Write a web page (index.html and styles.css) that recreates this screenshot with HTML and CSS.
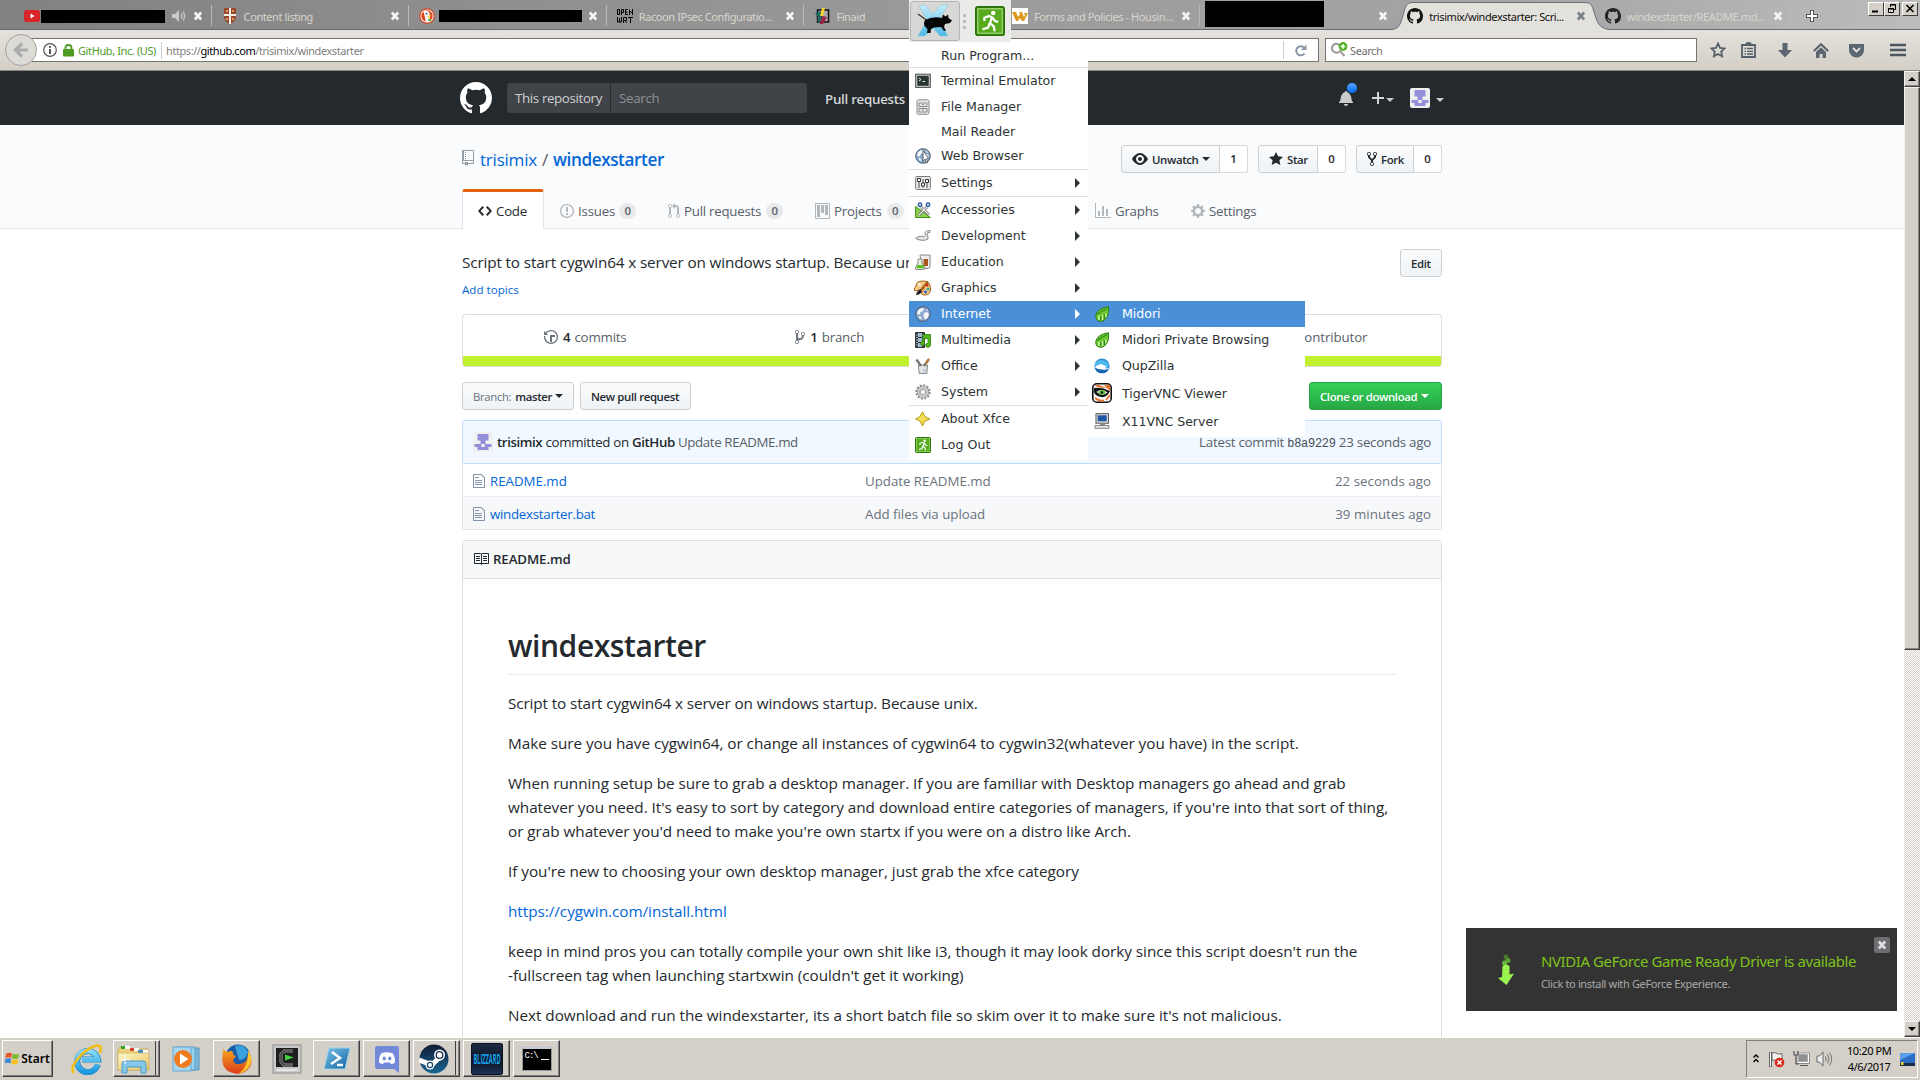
FILE: index.html
```html
<!DOCTYPE html>
<html lang="en">
<head>
<meta charset="utf-8">
<title>trisimix/windexstarter</title>
<link rel="stylesheet" href="styles.css">
</head>
<body>
<svg class="defs" width="0" height="0">
  <defs>
    <symbol id="x" viewBox="0 0 10 10"><path d="M1.8 1.5 8.2 8.5M8.2 1.5 1.8 8.5" stroke="currentColor" stroke-width="2.6"/></symbol>
    <symbol id="caret" viewBox="0 0 8 4"><path d="M0 0h8L4 4z" fill="currentColor"/></symbol>
    <symbol id="gh" viewBox="0 0 16 16"><path d="M8 0C3.58 0 0 3.58 0 8c0 3.54 2.29 6.53 5.47 7.59.4.07.55-.17.55-.38 0-.19-.01-.82-.01-1.49-2.01.37-2.53-.49-2.69-.94-.09-.23-.48-.94-.82-1.13-.28-.15-.68-.52-.01-.53.63-.01 1.08.58 1.23.82.72 1.21 1.87.87 2.33.66.07-.52.28-.87.51-1.07-1.78-.2-3.64-.89-3.64-3.95 0-.87.31-1.59.82-2.15-.08-.2-.36-1.02.08-2.12 0 0 .67-.21 2.2.82.64-.18 1.32-.27 2-.27.68 0 1.36.09 2 .27 1.53-1.04 2.2-.82 2.2-.82.44 1.1.16 1.92.08 2.12.51.56.82 1.27.82 2.15 0 3.07-1.87 3.75-3.65 3.95.29.25.54.73.54 1.48 0 1.07-.01 1.93-.01 2.2 0 .21.15.46.55.38A8.013 8.013 0 0 0 16 8c0-4.42-3.58-8-8-8z" fill="currentColor"/></symbol>
    <symbol id="avatar" viewBox="0 0 20 20"><rect width="20" height="20" rx="2" fill="#f0f0f0"/><path d="M4.500 2h11v6.500h-3V12h6v3h-3v3h-11v-3h-3v-3h6V8.500h-3z" fill="#938fd9"/><path d="M8.300 12h3.400v3H8.300z" fill="#f0f0f0"/></symbol>
    <symbol id="file" viewBox="0 0 12 16"><path d="M6 5H2V4h4v1zM2 8h7V7H2v1zm0 2h7V9H2v1zm0 2h7v-1H2v1zm10-7.500V14c0 .55-.45 1-1 1H1c-.55 0-1-.45-1-1V2c0-.55.45-1 1-1h7.500L12 4.500zM11 5L8 2H1v12h10V5z" fill="currentColor"/></symbol>
    <symbol id="leaf" viewBox="0 0 16 16"><path d="M14.500.8C8 1.500 1.500 5 1.800 11c.2 3 2.700 4.500 5 4.300C12 15 15.500 9 14.500.8z" fill="#6cc82f" stroke="#2b7d14"/><path d="M5 14V9.500M8.500 14V9M12 11V7.500" stroke="#d8f7b0" stroke-width="1.300" fill="none"/><path d="M3.500 8.500C7 5 10 4 13.500 2.500M6.800 14V10M10.300 13V8.500" stroke="#2f8a18" fill="none" stroke-width="1.200"/></symbol>
    <symbol id="exit" viewBox="0 0 16 16"><rect x=".5" y=".5" width="15" height="15" rx="1" fill="#57ab1d" stroke="#2c7409"/><rect x="1.500" y="1.500" width="13" height="13" fill="none" stroke="#b7e39a" stroke-width=".5"/><circle cx="9.700" cy="3.700" r="1.200" fill="#fff"/><path d="M5 8V6.300L7.500 5.300 9 6 8 9.200l2 1.600.5 2.700M7.800 9.200 7 11.500 4 12.500M9.300 6l1.300 2 1.800.5" fill="none" stroke="#fff" stroke-width="1.200"/></symbol>
    <symbol id="globe" viewBox="0 0 16 16"><circle cx="8" cy="8" r="7.300" fill="#8eabcf" stroke="#4d5a6c"/><path d="M3 4.500C5 2 8 2 9 2.500L8 5 5.500 6 5 8 3.500 8.500 2 7zM9 7l3-1 2 2-1.500 4L10 13.500 8.500 10zM11 2.500l2 1.500-1 1zM4 10l2 1 .5 2.500L4 12z" fill="#f5f7fa"/></symbol>
    <linearGradient id="gfx" x2="0" y2="1"><stop stop-color="#c4ecfb"/><stop offset="1" stop-color="#4db8e4"/></linearGradient>
    <linearGradient id="ps" x2="1" y2="1"><stop stop-color="#7cc4e8"/><stop offset="1" stop-color="#0f62a4"/></linearGradient>
    <linearGradient id="fo" x2="1" y2="1"><stop stop-color="#fdf5c4"/><stop offset="1" stop-color="#e8c766"/></linearGradient>
    <linearGradient id="fx" x2="0" y2="1"><stop stop-color="#f9a61b"/><stop offset="1" stop-color="#d93a1c"/></linearGradient>
    <linearGradient id="st" x2="0" y2="1"><stop stop-color="#101a33"/><stop offset="1" stop-color="#1b6795"/></linearGradient>
    <linearGradient id="ie" x2="0" y2="1"><stop stop-color="#8adcf8"/><stop offset="1" stop-color="#1d9be0"/></linearGradient>
  </defs>
</svg>

<div class="tabstrip">
  <div class="tab">
    <svg width="16" height="12" viewBox="0 0 16 12"><rect width="16" height="12" rx="2.500" fill="#d9252a"/><path d="M6.500 3.500v5l4-2.500z" fill="#fff"/></svg>
    <span class="redact r1"></span>
    <svg class="spk" width="14" height="12" viewBox="0 0 14 12"><path d="M0 4h3l4-4v12L3 8H0z" fill="#c9c9c3"/><path d="M9 3.500q2 2.500 0 5M11 1.500q3.500 4.500 0 9" fill="none" stroke="#c9c9c3" stroke-width="1.300"/></svg>
    <svg class="close"><use href="#x"/></svg>
  </div>
  <div class="tab">
    <svg width="16" height="16" viewBox="0 0 16 16"><path d="M2 0h12v9q-1 5-6 7-5-2-6-7z" fill="#99452f"/><path d="M8 0v16M2 7h12" stroke="#f5efe6" stroke-width="2"/><path d="M4 3h2M10 3h2M4 11h2M10 11h2" stroke="#d8a25a" stroke-width="2"/></svg>
    <span class="title">Content listing</span><svg class="close"><use href="#x"/></svg>
  </div>
  <div class="tab">
    <svg width="16" height="16" viewBox="0 0 16 16"><circle cx="8" cy="8" r="7.800" fill="#d9431e"/><circle cx="8" cy="8" r="6.600" fill="#fff"/><circle cx="8" cy="8" r="5.700" fill="#d9431e"/><path d="M4.500 3.500q4-2 6 1.500l.5 4-1 5H7z" fill="#fff"/><path d="M8.500 7.500h4l-2 2h-2z" fill="#fc3"/><circle cx="7.500" cy="5.700" r=".9" fill="#246"/><path d="M9 11h3v2H9z" fill="#5b3"/></svg>
    <span class="redact r3"></span><svg class="close"><use href="#x"/></svg>
  </div>
  <div class="tab">
    <svg width="16" height="14" viewBox="0 0 16 14" fill="none" stroke="#000"><path d="M.5.5h2v5h-2zM4.500 6V.5h2v3h-2M11 .5H8.500v5H11M8.500 3H10.500M12.500 6V.5M15.500 0v6M12.500 1.500l3 3M.5 8v5h4V8M2.500 9v4M6.500 14V8.500h3v3h-3M8.500 11.500l1 2.500M11 8.500h5M13.500 8.500V14"/></svg>
    <span class="title">Racoon IPsec Configuratio...</span><svg class="close"><use href="#x"/></svg>
  </div>
  <div class="tab">
    <svg width="16" height="16" viewBox="0 0 16 16"><rect x="3.500" y="2" width="11" height="12" fill="#aaa" stroke="#111" stroke-width="1.500"/><path d="M1 5 8 3l1 6-4 6-2-3 2-2z" fill="#17695f"/><path d="M8 0h3L9 8H6z" fill="#f6d32f"/><path d="M8 8 13 9l-4 7H6z" fill="#9c2146"/></svg>
    <span class="title">Finaid</span>
  </div>
  <div class="tab">
    <svg width="16" height="16" viewBox="0 0 16 16"><rect width="16" height="16" fill="#fff"/><path d="M0 4h4l2 5 2-3-1-2h3l2 5 1-2-1-2h4l-4 8h-2L8 10l-2 3H4z" fill="#d99a1d"/></svg>
    <span class="title">Forms and Policies - Housin...</span><svg class="close"><use href="#x"/></svg>
  </div>
  <div class="tab last"><span class="redact r7"></span><svg class="close"><use href="#x"/></svg></div>
  <div class="tab active">
    <svg class="shape" width="220" height="30" viewBox="0 0 220 30"><path d="M0 30C10 29 10 21 13 12 15 4 17 2.500 23 2.500H193C199 2.500 201 4 203 12 206 21 207 29 220 30z" fill="#e3e1db"/><path d="M0 29.500C10 29 10 21 13 12 15 4 17 2.500 23 2.500H193C199 2.500 201 4 203 12 206 21 207 29 220 29.500" fill="none" stroke="#697078"/></svg>
    <svg width="16" height="16" color="#111"><use href="#gh"/></svg>
    <span class="title">trisimix/windexstarter: Scri...</span><svg class="close"><use href="#x"/></svg>
  </div>
  <div class="tab">
    <svg width="16" height="16" color="#222"><use href="#gh"/></svg>
    <span class="title">windexstarter/README.md...</span><svg class="close"><use href="#x"/></svg>
  </div>
  <svg class="newtab" width="12" height="12" viewBox="0 0 12 12"><path d="M6 0v12M0 6h12" stroke="#555" stroke-width="4"/><path d="M6 1v10M1 6h10" stroke="#fff" stroke-width="2"/></svg>
  <div class="winbtns">
    <b><svg width="12" height="11"><path d="M2 8.500h6" stroke="#000" stroke-width="2"/></svg></b><b><svg width="12" height="11"><path d="M4.500 4V1.500h5v5H8M4 2h6M2.500 5.500h5v4h-5zM2 6h6" stroke="#000" fill="none"/></svg></b><b class="gap"><svg width="12" height="11"><path d="M2.500 2l7 7M9.500 2l-7 7" stroke="#000" stroke-width="1.600"/></svg></b>
  </div>
</div>

<div class="toolbar">
  <div class="back"><svg width="16" height="16" viewBox="0 0 16 16"><path d="M9 1.500 2.500 8 9 14.500M3 8h12" fill="none" stroke="#a8acae" stroke-width="3.200"/></svg></div>
  <div class="url">
    <svg width="14" height="14" viewBox="0 0 14 14"><circle cx="7" cy="7" r="6.300" fill="none" stroke="#555" stroke-width="1.200"/><path d="M7 6v5M7 3v1.800" stroke="#444" stroke-width="1.800"/></svg>
    <svg width="11" height="13" viewBox="0 0 11 13"><path d="M2.500 6V4a3 3 0 0 1 6 0v2" fill="none" stroke="#4d9a1e" stroke-width="1.800"/><rect y="5" width="11" height="7.500" rx="1" fill="#4d9a1e"/></svg>
    <span class="ident">GitHub, Inc. (US)</span>
    <span class="addr">https://<i>github.com</i>/trisimix/windexstarter</span>
    <span class="reload"><svg width="13" height="13" viewBox="0 0 13 13"><path d="M10.500 9.500a4.600 4.600 0 1 1-.4-6" fill="none" stroke="#8796a5" stroke-width="2"/><path d="M12.500.5v5.500H7z" fill="#8796a5"/></svg></span>
  </div>
  <div class="search"><svg width="17" height="17" viewBox="0 0 17 17"><path d="M9 3.500A4.500 4.500 0 1 0 9 9l4.500 5" fill="none" stroke="#9a9a9a" stroke-width="2"/><circle cx="12" cy="4.500" r="4.400" fill="#4fae1f"/><path d="M12 2v5M9.500 4.500h5" stroke="#fff" stroke-width="1.400"/></svg><span>Search</span></div>
  <div class="tools">
    <svg width="16" height="16" viewBox="0 0 16 16"><path d="M8 1.500l2 4.300 4.600.6-3.400 3.200.9 4.600L8 12l-4.100 2.200.9-4.600L1.400 6.400 6 5.800z" fill="none" stroke="#56606a" stroke-width="1.800"/></svg>
    <svg class="t2" width="15" height="16" viewBox="0 0 15 16"><path d="M1 3h13v12H1zM5 3q0-2 2.500-2T10 3" fill="none" stroke="#56606a" stroke-width="1.800"/><path d="M3.500 6.500h1.500M6 6.500h6M3.500 9.300h1.500M6 9.300h6M3.500 12h1.500M6 12h6" stroke="#56606a" stroke-width="1.300"/></svg>
    <svg class="t3" width="16" height="15" viewBox="0 0 16 15"><path d="M5.500 0h5v7H15l-7 7.500L1 7h4.500z" fill="#5b6671"/></svg>
    <svg class="t4" width="16" height="15" viewBox="0 0 16 15"><path d="M.8 8 8 1.200 15.200 8" fill="none" stroke="#56606a" stroke-width="2"/><path d="M3 9l5-4.700L13 9v6h-3.500v-4h-3v4H3z" fill="#5b6671"/></svg>
    <svg class="t5" width="17" height="15" viewBox="0 0 17 15"><path d="M1 1h15v6a7.500 7.500 0 0 1-15 0z" fill="#5b6671"/><path d="M5 5l3.500 3.500L12 5" fill="none" stroke="#e3e1db" stroke-width="1.800"/></svg>
    <svg class="t6" width="16" height="14" viewBox="0 0 16 14"><path d="M0 2h16M0 7h16M0 12h16" stroke="#4d5863" stroke-width="2.600"/></svg>
  </div>
</div>

<div class="view">
 <div class="page">
  <div class="ghbar"><div class="wrap">
    <svg width="32" height="32" color="#fff"><use href="#gh"/></svg>
    <div class="ghsearch"><span class="scope">This repository</span><span class="ph">Search</span></div>
    <span class="nav">Pull requests</span>
    <div class="user">
      <span class="bell"><svg width="15" height="16" viewBox="0 0 15 16"><path d="M14 12v1H0v-1l.73-.58c.77-.77.81-2.550 1.190-4.420C2.690 3.230 6 2 6 2c0-.55.45-1 1-1s1 .45 1 1c0 0 3.390 1.230 4.160 5 .38 1.880.42 3.660 1.190 4.420l.66.58H14zm-7 4c1.110 0 2-.89 2-2H5c0 1.110.89 2 2 2z" fill="#ccc"/></svg><i></i></span>
      <svg class="plus" width="12" height="16" viewBox="0 0 12 16"><path d="M12 9H7v5H5V9H0V7h5V2h2v5h5z" fill="#d5d6d7"/></svg><svg class="c1" width="8" height="4"><use href="#caret"/></svg>
      <svg class="av" width="20" height="20"><use href="#avatar"/></svg><svg class="c2" width="8" height="4"><use href="#caret"/></svg>
    </div>
  </div></div>

  <div class="repohead"><div class="wrap col">
    <div class="rtitle">
      <svg width="12" height="16" viewBox="0 0 12 16"><path d="M4 9H3V8h1v1zm0-3H3v1h1V6zm0-2H3v1h1V4zm0-2H3v1h1V2zm8-1v12c0 .55-.45 1-1 1H6v2l-1.500-1.500L3 16v-2H1c-.55 0-1-.45-1-1V1c0-.55.45-1 1-1h10c.55 0 1 .45 1 1zm-1 10H1v2h2v-1h3v1h5v-2zm0-10H2v9h9V1z" fill="#959da5"/></svg>
      <a>trisimix</a><span class="slash">/</span><a class="name">windexstarter</a>
      <div class="social">
        <div class="pair w1"><span class="btn"><svg width="16" height="16" viewBox="0 0 16 16"><path d="M8.060 2C3 2 0 8 0 8s3 6 8.060 6C13 14 16 8 16 8s-3-6-7.940-6zM8 12c-2.200 0-4-1.780-4-4 0-2.200 1.800-4 4-4 2.220 0 4 1.800 4 4 0 2.220-1.780 4-4 4zm2-4c0 1.110-.89 2-2 2-1.110 0-2-.89-2-2 0-1.110.89-2 2-2 1.110 0 2 .89 2 2z" fill="#24292e"/></svg>Unwatch<svg class="cr" width="8" height="4"><use href="#caret"/></svg></span><span class="num">1</span></div>
        <div class="pair w2"><span class="btn"><svg width="14" height="16" viewBox="0 0 14 16"><path d="M14 6l-4.900-.64L7 1 4.900 5.360 0 6l3.600 3.260L2.670 14 7 11.670 11.330 14l-.93-4.740L14 6z" fill="#24292e"/></svg>Star</span><span class="num">0</span></div>
        <div class="pair w3"><span class="btn"><svg width="10" height="16" viewBox="0 0 10 16"><path d="M8 1a1.993 1.993 0 0 0-1 3.720V6L5 8 3 6V4.720A1.993 1.993 0 0 0 2 1a1.993 1.993 0 0 0-1 3.720V6.500l3 3v1.780A1.993 1.993 0 0 0 5 15a1.993 1.993 0 0 0 1-3.720V9.500l3-3V4.720A1.993 1.993 0 0 0 8 1zM2 4.200C1.340 4.200.8 3.650.8 3c0-.65.55-1.200 1.200-1.200.65 0 1.200.55 1.200 1.200 0 .65-.55 1.200-1.200 1.200zm3 10c-.66 0-1.200-.55-1.200-1.200 0-.65.55-1.200 1.200-1.200.65 0 1.200.55 1.200 1.200 0 .65-.55 1.200-1.200 1.200zm3-10c-.66 0-1.200-.55-1.200-1.200 0-.65.55-1.200 1.200-1.200.65 0 1.200.55 1.200 1.200 0 .65-.55 1.200-1.200 1.200z" fill="#24292e"/></svg>Fork</span><span class="num">0</span></div>
      </div>
    </div>
    <div class="rtabs">
      <span class="rt on"><svg width="14" height="16" viewBox="0 0 14 16"><path d="M9.500 3L8 4.500 11.500 8 8 11.500 9.500 13 14 8 9.500 3zm-5 0L0 8l4.500 5L6 11.500 2.500 8 6 4.500 4.500 3z" fill="#24292e"/></svg><em>Code</em></span>
      <span class="rt issues"><svg width="14" height="16" viewBox="0 0 14 16"><path d="M7 2.300c3.140 0 5.700 2.560 5.700 5.700s-2.560 5.700-5.700 5.700A5.710 5.710 0 0 1 1.300 8c0-3.140 2.560-5.700 5.700-5.700zM7 1C3.140 1 0 4.140 0 8s3.140 7 7 7 7-3.140 7-7-3.140-7-7-7zm1 3H6v5h2V4zm0 6H6v2h2v-2z"/></svg><em>Issues</em><u>0</u></span>
      <span class="rt pulls"><svg width="12" height="16" viewBox="0 0 12 16"><path d="M11 11.280V5c-.03-.78-.34-1.470-.94-2.060C9.460 2.350 8.780 2.030 8 2H7V0L4 3l3 3V4h1c.27.02.48.11.69.31.21.2.3.42.31.69v6.280A1.993 1.993 0 0 0 10 15a1.993 1.993 0 0 0 1-3.720zm-1 2.920c-.66 0-1.200-.55-1.200-1.200 0-.65.55-1.200 1.200-1.200.65 0 1.200.55 1.200 1.200 0 .65-.55 1.200-1.200 1.200zM4 3c0-1.110-.89-2-2-2a1.993 1.993 0 0 0-1 3.720v6.560A1.993 1.993 0 0 0 2 15a1.993 1.993 0 0 0 1-3.720V4.720c.59-.34 1-.98 1-1.720zm-.8 10c0 .66-.55 1.200-1.200 1.200-.65 0-1.200-.55-1.200-1.200 0-.65.55-1.200 1.200-1.200.65 0 1.200.55 1.200 1.200zM2 4.200C1.340 4.200.8 3.650.8 3c0-.65.55-1.200 1.200-1.200.65 0 1.200.55 1.200 1.200 0 .65-.55 1.200-1.200 1.200z"/></svg><em>Pull requests</em><u>0</u></span>
      <span class="rt projects"><svg width="15" height="16" viewBox="0 0 15 16"><path fill-rule="evenodd" d="M10 12h3V2h-3v10zm-4-2h3V2H6v8zm-4 4h3V2H2v12zm-1 1h13V1H1v14zM14 0H1a1 1 0 0 0-1 1v14a1 1 0 0 0 1 1h13a1 1 0 0 0 1-1V1a1 1 0 0 0-1-1z"/></svg><em>Projects</em><u>0</u></span>
      <span class="rt graphs"><svg width="16" height="16" viewBox="0 0 16 16"><path d="M16 14v1H0V0h1v14h15zM5 13H3V8h2v5zm4 0H7V3h2v10zm4 0h-2V6h2v7z"/></svg><em>Graphs</em></span>
      <span class="rt sett"><svg width="14" height="16" viewBox="0 0 14 16"><path d="M14 8.770v-1.600l-1.940-.64-.45-1.090.88-1.840-1.130-1.130-1.810.91-1.090-.45-.69-1.920h-1.600l-.63 1.940-1.110.45-1.840-.88-1.130 1.130.91 1.810-.45 1.090L0 7.230v1.590l1.940.64.45 1.090-.88 1.840 1.130 1.130 1.810-.91 1.090.45.69 1.920h1.590l.63-1.940 1.110-.45 1.840.88 1.130-1.130-.92-1.810.47-1.090L14 8.750v.02zM7 11c-1.660 0-3-1.340-3-3s1.340-3 3-3 3 1.340 3 3-1.340 3-3 3z"/></svg><em>Settings</em></span>
    </div>
  </div></div>

  <div class="main">
    <div class="desc"><div><p class="about">Script to start cygwin64 x server on windows startup. Because unix.</p><a class="topics">Add topics</a></div><span class="btn solo">Edit</span></div>
    <div class="summary">
      <div class="nums">
        <span><svg width="14" height="16" viewBox="0 0 14 16"><path d="M8 13H6V6h5v2H8v5zM7 1C4.810 1 2.870 2.020 1.590 3.590L0 2v4h4L2.500 4.500C3.550 3.170 5.170 2.300 7 2.300c3.140 0 5.700 2.560 5.700 5.700s-2.560 5.700-5.700 5.700A5.710 5.710 0 0 1 1.300 8c0-.34.03-.67.09-1H.08C.03 7.330 0 7.660 0 8c0 3.860 3.140 7 7 7s7-3.140 7-7-3.140-7-7-7z"/></svg><b>4</b>commits</span>
        <span><svg width="10" height="16" viewBox="0 0 10 16"><path d="M10 5c0-1.110-.89-2-2-2a1.993 1.993 0 0 0-1 3.720v.3c-.02.52-.23.98-.63 1.380-.4.4-.86.61-1.380.63-.83.02-1.480.16-2 .45V4.720a1.993 1.993 0 0 0-1-3.720C.88 1 0 1.890 0 3a2 2 0 0 0 1 1.720v6.560c-.59.35-1 .99-1 1.720 0 1.110.89 2 2 2 1.110 0 2-.89 2-2 0-.53-.2-1-.53-1.360.09-.06.48-.41.59-.47.25-.11.56-.17.94-.17 1.050-.05 1.950-.45 2.750-1.250S8.950 7.770 9 6.730h-.02C9.590 6.370 10 5.730 10 5zM2 1.800c.66 0 1.200.55 1.200 1.200 0 .65-.55 1.200-1.200 1.200C1.350 4.200.8 3.650.8 3c0-.65.55-1.200 1.200-1.200zm0 12.410c-.66 0-1.200-.55-1.200-1.200 0-.65.55-1.200 1.200-1.200.65 0 1.200.55 1.200 1.200 0 .65-.55 1.200-1.200 1.200zm6-8c-.66 0-1.200-.55-1.200-1.200 0-.65.55-1.200 1.200-1.200.65 0 1.200.55 1.200 1.200 0 .65-.55 1.200-1.200 1.200z"/></svg><b>1</b>branch</span>
        <span></span>
        <span class="contrib">contributor</span>
      </div>
      <div class="lang"></div>
    </div>
    <div class="actions">
      <span class="btn solo branch"><small>Branch:</small>master<svg class="cr" width="8" height="4"><use href="#caret"/></svg></span>
      <span class="btn solo npr">New pull request</span>
      <span class="btn solo clone">Clone or download<svg class="cr" width="8" height="4"><use href="#caret"/></svg></span>
    </div>
    <div class="tease">
      <svg width="20" height="20"><use href="#avatar"/></svg>
      <span class="who"><b>trisimix</b> committed on <b>GitHub</b> <i>Update README.md</i></span>
      <span class="latest">Latest commit <code>b8a9229</code> 23 seconds ago</span>
    </div>
    <div class="files">
      <div class="row"><svg width="12" height="16"><use href="#file"/></svg><a>README.md</a><span class="msg">Update README.md</span><span class="age">22 seconds ago</span></div>
      <div class="row alt"><svg width="12" height="16"><use href="#file"/></svg><a>windexstarter.bat</a><span class="msg">Add files via upload</span><span class="age">39 minutes ago</span></div>
    </div>
    <div class="readme">
      <h3><svg width="16" height="16" viewBox="0 0 16 16"><path d="M3 5h4v1H3V5zm0 3h4V7H3v1zm0 2h4V9H3v1zm11-5h-4v1h4V5zm0 2h-4v1h4V7zm0 2h-4v1h4V9zm2-6v9c0 .55-.45 1-1 1H9.500l-1 1-1-1H2c-.55 0-1-.45-1-1V3c0-.55.45-1 1-1h5.500l1 1 1-1H15c.55 0 1 .45 1 1zm-8 .5L7.500 3H2v9h6V3.500zm7-.5H9.500l-.5.5V12h6V3z" fill="#24292e"/></svg>README.md</h3>
      <article>
        <h1>windexstarter</h1>
        <p>Script to start cygwin64 x server on windows startup. Because unix.</p>
        <p>Make sure you have cygwin64, or change all instances of cygwin64 to cygwin32(whatever you have) in the script.</p>
        <p>When running setup be sure to grab a desktop manager. If you are familiar with Desktop managers go ahead and grab<br>whatever you need. It's easy to sort by category and download entire categories of managers, if you're into that sort of thing,<br>or grab whatever you'd need to make you're own startx if you were on a distro like Arch.</p>
        <p>If you're new to choosing your own desktop manager, just grab the xfce category</p>
        <p><a>https://cygwin.com/install.html</a></p>
        <p>keep in mind pros you can totally compile your own shit like i3, though it may look dorky since this script doesn't run the<br>-fullscreen tag when launching startxwin (couldn't get it working)</p>
        <p>Next download and run the windexstarter, its a short batch file so skim over it to make sure it's not malicious.</p>
      </article>
    </div>
  </div>
 </div>
 <div class="scroll"><b><svg width="8" height="4"><path d="M0 4h8L4 0z"/></svg></b><div class="thumb"></div><b class="down"><svg width="8" height="4"><path d="M0 0h8L4 4z"/></svg></b></div>
</div>

<div class="taskbar">
  <div class="tb start"><svg width="15" height="15" viewBox="0 0 15 15"><path d="M1 3q3-2 6-.5L6.300 7Q3.500 5.500.3 7z" fill="#e8542a"/><path d="M7.800 2.800Q11 4.300 14 2.800L13.300 7.300q-3 1.500-6.200 0z" fill="#7cb928"/><path d="M.2 8q3-1.500 6-.2l-.7 4.500q-3-1.300-6 .2z" fill="#3d8ad8"/><path d="M7 8.300q3 1.500 6.200 0l-.7 4.500q-3 1.500-6.200 0z" fill="#f8c21e"/></svg>Start</div>
  <div class="slot"><svg width="32" height="32" viewBox="0 0 32 32"><path d="M26.800 21.500A10.500 10.500 0 1 1 27 16.500H11" fill="none" stroke="#1c86c8" stroke-width="6"/><path d="M26.500 21.500A10.500 10.500 0 1 1 26.800 16.500H11" fill="none" stroke="url(#ie)" stroke-width="4.800"/><path d="M3 30C-3 24 12 7 24 3c6-2 7 2 4.500 7" fill="none" stroke="#f3bd16" stroke-width="2.600"/></svg></div>
  <div class="slot up stack"><svg width="34" height="32" viewBox="0 0 34 32"><path d="M1 7l2-3h8l2 2h18v21H1z" fill="#ecd27a" stroke="#c19a3a" stroke-width=".6"/><path d="M4 3h9v3H4z" fill="#31a52e"/><path d="M8 3h5v3H8z" fill="#fff"/><path d="M13 5h4v3h-4z" fill="#d4452c"/><path d="M17 5h5v3h-5z" fill="#fff"/><path d="M21 7h5v3h-5z" fill="#3e8ed0"/><path d="M26 7h5v3h-5z" fill="#fff"/><path d="M1 10h31v17H1z" fill="url(#fo)" stroke="#c9a64d" stroke-width=".6"/><path d="M5 30v-9q0-3 3-3h18q3 0 3 3v9h-5v-6H10v6z" fill="#86c8ea" stroke="#4b9ac6"/><path d="M8 12v9M4 16.500h9" stroke="#fff"/></svg></div>
  <div class="slot"><svg width="30" height="30" viewBox="0 0 30 30"><path d="M8 4h19v22H8z" fill="#7ab8da" stroke="#5796bd"/><path d="M5 3h18v23H5z" fill="#9bd0eb" stroke="#5b9dc4"/><path d="M1 3h18v24H1z" fill="#a5d6ef" stroke="#6aa9cc"/><circle cx="11" cy="15" r="9" fill="#f07a1e"/><path d="M8 9.500v11l8.500-5.500z" fill="#fff"/></svg></div>
  <div class="slot up"><svg width="32" height="32" viewBox="0 0 32 32"><circle cx="17" cy="14" r="12.500" fill="#1d5da8"/><path d="M14 3q9-3 13 6-2 8-9 8z" fill="#3aa0de"/><path d="M2 6q3 3 5 3 3-2 5 0-1 3 3 4l-3 4q1 5 7 4 9-1 8-12 6 8 2 15-6 8-15 6.500Q0 28 1.500 14q.5-4 .5-8z" fill="url(#fx)"/><path d="M27 7q6 9 1 17-5 6-10 6 10-6 9-23z" fill="#fbc62d"/></svg></div>
  <div class="slot"><svg width="30" height="30" viewBox="0 0 30 30"><rect x="1" y="1" width="28" height="28" fill="#c9c9c9" stroke="#8c8c8c"/><rect x="4" y="4" width="22" height="19" fill="#1d1d1d"/><path d="M21 7h-9l-3 3v8l3 3h9" fill="none" stroke="#999" stroke-width="3"/><path d="M21 7h-9l-3 3v8l3 3h9" fill="none" stroke="#222" stroke-width="1.200"/><path d="M13 10.500l9 3-9 3z" fill="#3bd13b"/><path d="M5 26h20" stroke="#eee" stroke-width="1.500"/></svg></div>
  <div class="slot up"><svg width="28" height="24" viewBox="0 0 28 24"><path d="M6 1h21l-5 21H1z" fill="url(#ps)" stroke="#9fd2ea"/><path d="M9 5l8 6-9 6M14 18h6" fill="none" stroke="#fff" stroke-width="2.400"/></svg></div>
  <div class="slot up"><svg width="26" height="28" viewBox="0 0 26 28"><path d="M3 1h20q2 0 2 2v25l-5-4H3q-2 0-2-2V3q0-2 2-2z" fill="#7289da"/><path d="M7 8.500q6-2.500 12 0 2.500 4.500 2 9-2 1.500-4 1.500l-1-1.500h-6L9 19q-2 0-4-1.500-.5-4.500 2-9z" fill="#fff"/><ellipse cx="10.200" cy="13.500" rx="1.600" ry="1.900" fill="#7289da"/><ellipse cx="15.800" cy="13.500" rx="1.600" ry="1.900" fill="#7289da"/></svg></div>
  <div class="slot up stack"><svg width="30" height="30" viewBox="0 0 30 30"><circle cx="15" cy="15" r="14.500" fill="url(#st)"/><path d="M0 16l9 3.500 3 2 8-7.500" fill="none" stroke="#fff" stroke-width="5"/><circle cx="20.500" cy="11" r="5.500" fill="#fff"/><circle cx="20.500" cy="11" r="3.300" fill="none" stroke="#152a4c" stroke-width="1.300"/><circle cx="11" cy="21" r="4.500" fill="#fff"/><circle cx="11" cy="21" r="2.600" fill="none" stroke="#1a4a72" stroke-width="1.200"/></svg></div>
  <div class="slot up"><svg class="bliz" width="32" height="32" viewBox="0 0 32 32"><text x="1.500" y="13.500" textLength="29" lengthAdjust="spacingAndGlyphs" transform="scale(1 1.600)">BLIZZARD</text></svg></div>
  <div class="slot up"><div class="cmd">C:\<i></i></div></div>
  <div class="tray">
    <svg class="chev" width="6" height="9" viewBox="0 0 6 9"><path d="M.5 3.500 3 1l2.500 2.500M.5 8 3 5.500 5.500 8" fill="none" stroke="#000" stroke-width="1.400"/></svg>
    <svg class="flag" width="17" height="17" viewBox="0 0 17 17"><path d="M2.500 1v15" stroke="#555" stroke-width="3"/><path d="M2.500 1.500v14" stroke="#fff" stroke-width="1.200"/><path d="M4 2q3-1 5 .5t5 0v7q-3 1-5 0t-5 0z" fill="#f4f4f4" stroke="#666"/><circle cx="11.500" cy="11.500" r="4.800" fill="#d92b1c"/><path d="M9.500 9.500l4 4M13.500 9.500l-4 4" stroke="#fff" stroke-width="1.500"/></svg>
    <svg class="net" width="17" height="16" viewBox="0 0 17 16"><rect x="4.500" y="2.500" width="11" height="9" fill="#8f8f8f" stroke="#fff" stroke-width="1.500"/><rect x="4" y="2" width="12.500" height="10.500" fill="none" stroke="#666" stroke-width=".7"/><path d="M7 14.500h8M1 0v4h4V0M3 4v9h3" fill="none" stroke="#555" stroke-width="1.200"/></svg>
    <svg class="vol" width="17" height="16" viewBox="0 0 17 16"><path d="M1 5h2.500L7 1v14l-3.500-4H1z" fill="#eee" stroke="#666"/><path d="M9.500 5.500q1.500 2.500 0 5M11.500 3.500q3 4.500 0 9M13.500 1.500q4.500 6.500 0 13" fill="none" stroke="#777"/></svg>
    <div class="clock"><span>10:20 PM</span><span>4/6/2017</span></div>
    <svg class="mon" width="15" height="13" viewBox="0 0 15 13"><rect width="15" height="13" fill="#1d2c47"/><rect width="15" height="10" fill="#2c6cc6"/><path d="M0 0h15L0 7z" fill="#5da0ea"/><path d="M1 9h2.500v3H1z" fill="#f5d23a"/></svg>
  </div>
</div>

<!-- Xfce launcher panel and applications menu -->
<div class="xpanel">
  <div class="xbtn"><svg width="36" height="34" viewBox="0 0 36 34"><path d="M2 2l6-1 8 9 8-9h7l-9 15 9 16h-8l-7-8-8 8H1l9-16z" fill="url(#gfx)" stroke="#8fc6dc" stroke-width=".6"/><path d="M1 10l9 6.500" stroke="#333" stroke-width="1.200"/><path d="M8 16q8-4 17-2l1-3.500 2.500 2 2.500-2 .5 3.500 3.500 2.500-2 2.500-5 1-1 3 2 3.500-2 .500-3-4-7 .5-3 1.500-.5 4H10l.5-4L7.500 22q-1.500-3 .5-6z" fill="#060606"/></svg></div>
  <div class="dots"><i></i><i></i><i></i></div>
  <svg width="30" height="30"><use href="#exit"/></svg>
</div>
<div class="menu m1">
  <div class="mi a"><span class="ic"></span>Run Program...</div>
  <div class="mi b sep"><svg class="ic" viewBox="0 0 16 16"><rect x=".7" y="1.200" width="14.600" height="13.200" fill="#ccc" stroke="#4b4f4c"/><rect x="2.300" y="2.800" width="11.400" height="10" fill="#2b3530"/><path d="M4 5l2 1.500L4 8M7.500 8.500H10" fill="none" stroke="#dfe" stroke-width="1"/></svg>Terminal Emulator</div>
  <div class="mi"><svg class="ic" viewBox="0 0 16 16"><rect x="2" y=".8" width="12" height="14.500" rx="1.500" fill="#e8e8e6" stroke="#8a8a88"/><path d="M4 4h8v3.500H4zM4 9.500h8V13H4zM7 5.500h2M7 11h2" fill="none" stroke="#8a8a88"/></svg>File Manager</div>
  <div class="mi c"><span class="ic"></span>Mail Reader</div>
  <div class="mi d"><svg class="ic"><use href="#globe"/><path d="M8 2.500v11l2-2.500 1.500 4 1.500-.8-1.500-3.500 2-.5z" fill="#fff" stroke="#445" stroke-width=".8"/></svg>Web Browser</div>
  <div class="mi sep"><svg class="ic" viewBox="0 0 16 16"><rect x=".7" y="1.500" width="14.600" height="13" rx="1" fill="#ebebea" stroke="#777"/><path d="M4 4v9M8 4v9M12 4v9" stroke="#444"/><path d="M2.500 3.500h3v3h-3zM6.500 8h3v3h-3zM10.500 4.500h3v3h-3z" fill="#fff" stroke="#333"/></svg>Settings<i class="ar"></i></div>
  <div class="mi sep"><svg class="ic" viewBox="0 0 16 16"><path d="M.6 4.500v11h14.800z" fill="#8bd252" stroke="#3f9212"/><path d="M6 5l8 8M12 5l-8 8" stroke="#666" stroke-width="2.600"/><path d="M6 5l8 8M12 5l-8 8" stroke="#eee" stroke-width="1.200"/><circle cx="5" cy="2.800" r="1.700" fill="none" stroke="#2d5fa8" stroke-width="1.500"/><circle cx="13" cy="2.800" r="1.700" fill="none" stroke="#2d5fa8" stroke-width="1.500"/></svg>Accessories<i class="ar"></i></div>
  <div class="mi"><svg class="ic" viewBox="0 0 16 16"><path d="M.7 10.500Q3 7.500 9.500 8.500q2-1 .5-3Q10 2.500 15 2.500v2q-3-.5-2.500 1l.5 5.500q-5 3-12.300-.5z" fill="#e4e4e2" stroke="#8a8a88"/></svg>Development<i class="ar"></i></div>
  <div class="mi"><svg class="ic" viewBox="0 0 16 16"><path d="M5 1h10v12q-1 1.500-3 1.500H7z" fill="#eee" stroke="#888"/><path d="M8.500 5h4.500v7H8.500z" fill="#a8551e"/><path d="M3 5h4v4l3 5q0 1.500-1.500 1.500h-7Q0 15.500.5 14L3 9z" fill="#e6f3da" stroke="#888"/><path d="M2.500 11h5.500l1.200 3.300H1.300z" fill="#5fbd26"/></svg>Education<i class="ar"></i></div>
  <div class="mi"><svg class="ic" viewBox="0 0 16 16"><path d="M1 6Q1 1 8 1t7.500 7-5.500 7-2-4-4-1-3-4z" fill="#f2c886" stroke="#a8651e"/><circle cx="4.500" cy="4.500" r="1.300" fill="#fff"/><circle cx="12" cy="5" r="1.500" fill="#d12"/><circle cx="13" cy="9" r="1.500" fill="#3a9"/><circle cx="10.500" cy="12" r="1.500" fill="#36c"/><path d="M13 1.500 6 10" stroke="#a35c12" stroke-width="2"/><path d="M1 15q1-5 5-5.500l1 2q-2 3.500-6 3.500z" fill="#222"/></svg>Graphics<i class="ar"></i></div>
  <div class="mi on"><svg class="ic"><use href="#globe"/></svg>Internet<i class="ar"></i></div>
  <div class="mi"><svg class="ic" viewBox="0 0 16 16"><path d="M.5.5h9v15h-9z" fill="#9db7cf" stroke="#333"/><path d="M2 1v14M8 1v14" stroke="#333" stroke-width="2" stroke-dasharray="1.500 1"/><path d="M3 5.500h4M3 10.500h4" stroke="#333"/><path d="M8 2.500h7.500v10.500q0 2.300-2.500 2.300t-2.500-2 2.500-2V6.500H9.500V11q0 2.500-2 2.500T5.500 11.500 8 9.500z" fill="#57b81e" stroke="#2b7d10" stroke-width=".8"/></svg>Multimedia<i class="ar"></i></div>
  <div class="mi"><svg class="ic" viewBox="0 0 16 16"><path d="M3.500 7h9l-.7 8.500H4.200z" fill="#e7e7e5" stroke="#888"/><path d="M1.500 1.500 6 8M14 1 9 8" stroke="#777" stroke-width="2.400"/><path d="M14 1 10.500 6" stroke="#c9772b" stroke-width="1.600"/><path d="M8 11h3v3H8z" fill="#bcd"/></svg>Office<i class="ar"></i></div>
  <div class="mi"><svg class="ic" viewBox="0 0 16 16"><circle cx="8" cy="8" r="6.700" fill="none" stroke="#8b8b89" stroke-width="2" stroke-dasharray="2 1.510"/><circle cx="8" cy="8" r="4.600" fill="none" stroke="#8b8b89" stroke-width="3"/><circle cx="8" cy="8" r="4.500" fill="none" stroke="#d4d4d2" stroke-width="1.800"/><circle cx="8" cy="8" r="2.500" fill="#fff" stroke="#8b8b89" stroke-width=".8"/></svg>System<i class="ar"></i></div>
  <div class="mi sep"><svg class="ic" viewBox="0 0 16 16"><path d="M7.500.8 10 5.500l5 2.500-5 2-2.500 5L5 10 .5 8 5 5.500z" fill="#f1dc55" stroke="#b99d1a"/></svg>About Xfce</div>
  <div class="mi"><svg class="ic"><use href="#exit"/></svg>Log Out</div>
</div>
<div class="menu m2">
  <div class="mi on"><svg class="ic"><use href="#leaf"/></svg>Midori</div>
  <div class="mi"><svg class="ic"><use href="#leaf"/></svg>Midori Private Browsing</div>
  <div class="mi"><svg class="ic" viewBox="0 0 16 16"><circle cx="8" cy="8" r="7.600" fill="#2b8fd2"/><path d="M1 5q6-6 13 0 2 3-1 5-2 0-2-2-5-3-10 1z" fill="#4db8ea"/><path d="M2 8q5-3 8-.5l2.500.5-1.500 2.500 4.500-.5Q13 12.500 8 12 4 11.500 1 9.500z" fill="#fff"/><path d="M1 10q4 2 7 1.500 4 1 6.500-.5-1 4-6.500 4t-7-5z" fill="#1a62ad"/></svg>QupZilla</div>
  <div class="mi big"><svg class="ic" viewBox="0 0 20 20"><rect x=".8" y=".8" width="18.400" height="18.400" rx="4" fill="#fff" stroke="#111" stroke-width="1.600"/><path d="M2 2h5l8 3-8-.5zM12 2h6v6z" fill="#e8702a"/><path d="M2 5q8-1 16 3-3 7-9 6T2 9z" fill="#111"/><path d="M4.500 9q5-4 11 .5-5 4.500-11-.5z" fill="#fff"/><ellipse cx="10" cy="9.600" rx="3.500" ry="2.500" fill="#5fc94a"/><circle cx="10" cy="9.600" r="1.300" fill="#111"/><path d="M3 15q4 3.500 9 2.500M14 17l4-5" stroke="#e8702a" stroke-width="1.800" fill="none"/></svg>TigerVNC Viewer</div>
  <div class="mi big x11"><svg class="ic" viewBox="0 0 16 16"><rect x="2" y=".7" width="12.500" height="9.500" fill="#ddd" stroke="#555"/><rect x="3.700" y="2.300" width="9" height="6" fill="#1f56a3"/><path d="M6 10.500h5v2H6z" fill="#888"/><path d="M1 12.500h14v2.800H1z" fill="#e6e6e4" stroke="#666" stroke-width=".8"/></svg>X11VNC Server</div>
</div>

<div class="toast">
  <svg class="dl" width="18" height="32" viewBox="0 0 18 32"><circle cx="9" cy="3" r="2.500" fill="#46792a"/><circle cx="11" cy="6.500" r="2.500" fill="#5c9e35"/><circle cx="7.500" cy="9" r="2.500" fill="#69b83c"/><path d="M5.500 12q4-3 7 0v8.500L17 19.500 9.500 31 1 24l4-1z" fill="#9cf54f"/></svg>
  <div class="tx"><strong>NVIDIA GeForce Game Ready Driver is available</strong><span>Click to install with GeForce Experience.</span></div>
  <b class="tc"><svg width="10" height="10"><use href="#x"/></svg></b>
</div>
</body>
</html>
```
FILE: styles.css
```css
* { box-sizing: border-box; }
html, body { margin: 0; height: 100%; overflow: hidden; }
body {
  width: 1920px; height: 1080px; position: relative; display: flex; flex-direction: column;
  font: 13.3px "Open Sans", "Noto Sans", sans-serif; color: #24292e; background: #fff; white-space: nowrap;
}
.defs { position: absolute; }
svg { flex: none; display: block; }
i, em { font-style: normal; }
a { color: #0366d6; }
p, h1, h3 { margin: 0; }

/* browser chrome */
.tabstrip, .toolbar { font: 11px "Noto Sans", sans-serif; letter-spacing: -.41px; }
.tabstrip { height: 30px; display: flex; padding-left: 14px; background: linear-gradient(90deg, #828282, #989898 45%, #a6a6a6 80%, #bcbcbc); border-bottom: 1px solid #656c74; }
.tab { position: relative; width: 197.6px; flex: none; display: flex; align-items: center; padding: 3px 9px 0 10px; color: #d9d6cd; }
.tab::after { content: ""; position: absolute; right: 0; top: 5px; height: 21px; width: 1px; background: #b9b9b7; }
.tab.active::after, .tab.last::after { display: none; }
.title { margin-left: 6px; position: relative; }
.close { width: 10px; height: 10px; margin-left: auto; color: #f4f4f2; position: relative; }
.redact { background: #000; }
.r1 { width: 124px; height: 13px; margin-left: 1px; }
.spk { margin-left: 7px; }
.r3 { width: 143px; height: 12px; margin-left: 4px; }
.r7 { width: 119px; height: 26px; margin: -4px 0 0 -5px; }
.active { color: #111; }
.active .shape { position: absolute; left: -6px; top: 0; }
.active > svg:not(.shape) { position: relative; }
.active .close { color: #7a838b; }
.newtab { margin: 10px 0 0 14px; }
.winbtns { margin-left: auto; display: flex; padding: 2px 2px 0 0; }
.winbtns b { width: 16px; height: 14px; background: #d4d0c8; border: 1px solid; border-color: #fff #404040 #404040 #fff; display: flex; justify-content: center; }
.winbtns .gap { margin-left: 2px; }

.toolbar { height: 41px; display: flex; align-items: center; background: linear-gradient(#e4e2dc, #d3cfc7); border-bottom: 1px solid #8b8983; padding: 0 13px 0 5px; }
.back { width: 32px; height: 32px; border-radius: 50%; border: 1px solid #a5a39d; background: #dddbd5; display: flex; align-items: center; justify-content: center; z-index: 1; flex: none; }
.url { width: 1290px; margin-left: -8px; height: 24px; background: #fff; border: 1px solid #77756f; display: flex; align-items: center; padding-left: 13px; flex: none; }
.url > svg + svg { margin-left: 6px; }
.ident { color: #4d9a1e; margin-left: 4px; letter-spacing: -.39px; padding-right: 5px; border-right: 1px solid #ccc; line-height: 17px; }
.addr { color: #80807e; margin-left: 4px; letter-spacing: -.43px; }
.addr i { color: #000; }
.reload { margin-left: auto; width: 35px; height: 18px; border-left: 1px solid #ccc; display: flex; align-items: center; padding-left: 10px; }
.search { width: 372px; height: 24px; margin-left: 6px; background: #fff; border: 1px solid #77756f; display: flex; align-items: center; padding-left: 5px; color: #6f6f6d; flex: none; }
.search span { margin-left: 2px; }
.tools { display: flex; align-items: center; flex: 1; padding-left: 13px; }
.t2 { margin-left: 15px; } .t3 { margin-left: 21px; } .t4 { margin-left: 20px; } .t5 { margin-left: 19px; } .t6 { margin-left: 25px; }

/* viewport */
.view { height: 966px; display: flex; overflow: hidden; flex: none; }
.page { width: 1904px; overflow: hidden; }
.scroll { width: 16px; display: flex; flex-direction: column; background: repeating-conic-gradient(#fff 0 25%, #d4d0c8 0 50%) 0 0 / 2px 2px; }
.scroll b, .thumb { background: #d4d0c8; border: 1px solid; border-color: #f4f2ee #404040 #404040 #f4f2ee; box-shadow: inset -1px -1px #87857f; }
.scroll b { height: 16px; display: flex; align-items: center; justify-content: center; }
.thumb { height: 563px; }
.down { margin-top: auto; }

.wrap { width: 980px; margin: 0 auto; display: flex; }
.col { flex-direction: column; }
.ghbar { height: 54px; background: #24292e; }
.ghbar .wrap { height: 54px; align-items: center; width: 984px; }
.ghsearch { width: 300px; height: 30px; margin-left: 15px; background: #404448; border-radius: 3px; display: flex; line-height: 31px; font-size: 13.3px; }
.scope { width: 104px; padding-left: 8px; color: #ced0d1; border-right: 1px solid #26292d; letter-spacing: -.35px; }
.ph { padding-left: 8px; color: #8f9194; letter-spacing: -.3px; }
.nav { margin-left: 18px; padding-top: 1px; font-weight: 600; color: #d5d6d7; letter-spacing: -.27px; }
.user { margin-left: auto; display: flex; align-items: center; color: #ccc; }
.bell { position: relative; margin-top: -1px; }
.bell i { position: absolute; left: 7px; top: -8px; width: 10px; height: 10px; border-radius: 50%; background: linear-gradient(#54a3ff, #006eed); border: 1px solid #24292e; box-sizing: content-box; }
.plus { margin-left: 18px; } .c1 { margin: 3px 0 0 2px; } .av { margin-left: 16px; } .c2 { margin: 3px 0 0 6px; }

.repohead { height: 104px; background: #fafbfc; border-bottom: 1px solid #e1e4e8; padding-top: 20px; }
.rtitle { display: flex; height: 28px; align-items: center; font-size: 17.1px; letter-spacing: -.25px; }
.rtitle > svg { margin: -3px 6px 0 0; }
.slash { margin: 0 5px; color: #586069; }
.name { font-weight: 600; letter-spacing: -.38px; }
.social { margin-left: auto; display: flex; gap: 10px; font-size: 11.4px; }
.pair { display: flex; height: 28px; }
.w1 { width: 127px; } .w2 { width: 88px; } .w3 { width: 86px; }
.btn { font-weight: 600; font-size: 11.4px; letter-spacing: -.36px; color: #24292e; background: linear-gradient(#fafbfc, #eff3f6); border: 1px solid #cdcfd1; border-radius: 3px; display: flex; align-items: center; flex: 1; padding-left: 10px; height: 28px; }
.pair .btn { border-radius: 3px 0 0 3px; }
.btn > svg:first-child { margin-right: 4px; }
.btn .cr { margin-left: 4px; }
.num { width: 28px; border: 1px solid #d7d9db; border-left: 0; border-radius: 0 3px 3px 0; background: #fff; text-align: center; line-height: 26px; font-weight: 600; font-size: 11.4px; }
.solo { flex: none; }
.rtabs { display: flex; margin-top: 16px; height: 40px; color: #586069; }
.rt { display: flex; align-items: center; height: 40px; letter-spacing: -.25px; padding-top: 3px; }
.rt svg { fill: #b4b7ba; }
.rt em { margin-left: 4px; }
.rt u { text-decoration: none; margin-left: 5px; background: #e8e9eb; border-radius: 9px; width: 17px; height: 16px; line-height: 16px; text-align: center; font-size: 11.4px; font-weight: 600; letter-spacing: 0; }
.rt.on { width: 82px; background: #fff; border: 1px solid #e1e4e8; border-top: 3px solid #e36209; border-bottom: 0; border-radius: 3px 3px 0 0; padding: 0 0 0 15px; color: #24292e; }
.issues { width: 92px; margin-left: 16px; } .pulls { width: 130px; margin-left: 16px; } .projects { width: 280px; margin-left: 17px; } .graphs { width: 96px; }
.rt.issues em { letter-spacing: -.2px; }
.issues u { margin-left: 4px; }

.main { width: 980px; margin: 0 auto; padding-top: 20px; }
.desc { display: flex; justify-content: space-between; height: 65px; }
.about { font-size: 15.3px; letter-spacing: -.15px; line-height: 27px; }
.topics { font-size: 11.6px; line-height: 28px; letter-spacing: 0; }
.desc .btn { width: 42px; }
.summary { height: 53px; border: 1px solid #ddd; border-radius: 3px; overflow: hidden; }
.nums { display: grid; grid-template-columns: repeat(4, 1fr); height: 41px; align-items: center; color: #586069; letter-spacing: -.2px; }
.nums span { display: flex; align-items: center; justify-content: center; padding-top: 2px; }
.nums svg { fill: #6a737d; }
.nums b { color: #24292e; font-weight: 600; margin: 0 4px 0 5px; }
.nums .contrib { padding-left: 28px; letter-spacing: -.1px; }
.lang { height: 10px; background: #c1f12e; }
.actions { display: flex; margin: 15px 0 10px; }
.branch { width: 112px; } .branch small { font: 11.4px "Open Sans", sans-serif; color: #6a737d; margin-right: 4px; }
.branch .cr { margin-left: 3px; }
.npr { width: 111px; margin-left: 6px; }
.clone { width: 133px; margin-left: auto; color: #fff; background: linear-gradient(#34d058, #28a745); border-color: #26a045; }
.tease { height: 44px; background: #f1f8ff; border: 1px solid #c1ddfb; border-radius: 3px 3px 0 0; display: flex; align-items: center; padding: 0 10px 0 10px; letter-spacing: -.3px; }
.who { margin-left: 4px; }
.who b { font-weight: 600; letter-spacing: -.42px; }
.who i { color: #586069; letter-spacing: -.38px; }
.latest { margin-left: auto; color: #586069; letter-spacing: -.24px; }
.latest code { font: 12px "Liberation Mono", monospace; color: #444d56; letter-spacing: -.3px; }
.files { border: 1px solid #dfe2e5; border-top: 0; border-radius: 0 0 3px 3px; height: 66px; }
.row { height: 32px; display: flex; align-items: center; padding: 2px 10px 0; color: #6a737d; letter-spacing: -.27px; }
.row svg { color: #8295a9; }
.row a { margin-left: 5px; width: 375px; }
.row:first-child { height: 33px; border-bottom: 1px solid #eaecef; }
.row:first-child a { letter-spacing: -.02px; }
.alt { background: #f6f8fa; }
.age { margin-left: auto; letter-spacing: .04px; }
.row .msg { letter-spacing: -.02px; }
.readme { margin-top: 10px; border: 1px solid #ddd; border-radius: 3px 3px 0 0; height: 560px; }
.readme h3 { height: 38px; background: #f6f8fa; border-bottom: 1px solid #ddd; display: flex; align-items: center; padding: 0 0 1px 10px; font-size: 13.3px; font-weight: 600; letter-spacing: -.12px; }
.readme h3 svg { margin-right: 4px; }
article { padding: 45px; font-size: 15.3px; line-height: 24px; letter-spacing: -.04px; }
article h1 { font-size: 30px; font-weight: 600; line-height: 40px; letter-spacing: -.42px; padding: 2px 0 8px; border-bottom: 1px solid #eaecef; margin-bottom: 16px; }
article p { margin-bottom: 16px; }
article h1 + p { letter-spacing: -.12px; }

/* taskbar */
.taskbar { height: 43px; background: #d4d0c8; border-top: 1px solid #fff; flex: none; display: flex; align-items: flex-start; padding: 2px 2px 0; gap: 3px; }
.tb { width: 51px; height: 37px; border: 1px solid; border-color: #fff #404040 #404040 #fff; box-shadow: inset -1px -1px #808080; margin-right: 7px; display: flex; align-items: center; justify-content: center; gap: 1px; font: 600 12px "Noto Sans", sans-serif; color: #000; }
.slot { width: 47px; height: 37px; display: flex; align-items: center; justify-content: center; flex: none; }
.up { border: 1px solid; border-color: #fff #404040 #404040 #fff; box-shadow: inset -1px -1px #808080; }
.stack { box-shadow: inset -1px -1px #808080, inset -3px 0 #d4d0c8, inset -4px 0 #404040; padding-right: 6px; }
.bliz { background: linear-gradient(#1d2a44, #0d1526 60%, #1f3358); border: 1px solid #0b1020; border-radius: 2px; }
.bliz text { font: 700 9px "Open Sans", sans-serif; fill: #12a4ea; }
.cmd { width: 30px; height: 25px; background: #000; border: 1px solid #999; border-top: 3px solid #c9ccd2; color: #fff; font: 9px/13px "Liberation Mono", monospace; padding: 1px 2px; display: flex; letter-spacing: -1px; }
.cmd i { width: 8px; height: 1px; background: #fff; margin: 9px 0 0 3px; }
.tray { margin-left: auto; width: 172px; height: 38px; border: 1px solid; border-color: #808080 #fff #fff #808080; display: flex; align-items: center; padding-left: 6px; font: 11px "Noto Sans", sans-serif; letter-spacing: -.42px; color: #000; }
.chev { margin-top: -2px; } .flag { margin-left: 9px; } .net { margin-left: 8px; } .vol { margin-left: 6px; }
.clock { display: flex; flex-direction: column; line-height: 16px; align-items: center; margin-left: 14px; }
.mon { margin-left: 9px; }

/* Xfce overlay */
.xpanel { position: absolute; left: 909px; top: 0; width: 102px; height: 42px; background: #ebebe9; display: flex; align-items: center; padding-left: 1px; }
.xbtn { width: 50px; height: 40px; border: 1px solid #b3b3b1; border-radius: 3px; background: #d7d7d5; display: flex; align-items: center; justify-content: center; }
.dots { display: flex; flex-direction: column; gap: 3px; margin: 0 9px 0 3px; }
.dots i { width: 3px; height: 3px; background: #bdbdbb; }
.menu { position: absolute; background: #fff; font: 12.6px "DejaVu Sans", sans-serif; color: #2e3436; display: flex; flex-direction: column; }
.m1 { left: 909px; top: 42px; width: 179px; height: 418px; }
.m2 { left: 1088px; top: 301px; width: 217px; height: 136px; }
.mi { height: 26px; display: flex; align-items: center; padding: 0 0 2px 6px; flex: none; }
.mi .ic { width: 16px; height: 16px; margin: 1px 10px 0 0; overflow: visible; }
.mi.sep { height: 27px; border-top: 1px solid #dfdfdf; }
.mi.a { height: 25px; padding: 1px 0 0 6px; } .mi.c { height: 24px; } .mi.d { height: 25px; }
.on.mi { background: #4a90d9; color: #fff; }
.ar { margin: 1px 8px 0 auto; border: 5px solid transparent; border-left-color: #2e3436; border-right: 0; }
.on .ar { border-left-color: #fff; }
.m2 .mi { letter-spacing: -.04px; }
.m2 .ic { margin-right: 12px; }
.m2 .big { height: 29px; padding-bottom: 1px; }
.m2 .big .ic { width: 20px; height: 20px; margin: 0 10px 0 -2px; }
.m2 .x11 { height: 28px; padding-bottom: 2px; }
.m2 .x11 .ic { width: 16px; height: 16px; margin: 0 12px 0 0; }

.toast { position: absolute; left: 1466px; top: 928px; width: 431px; height: 83px; background: #333; display: flex; align-items: center; padding-left: 31px; font-family: "Noto Sans", sans-serif; }
.tx { margin-left: 26px; padding-top: 4px; display: flex; flex-direction: column; }
.tx strong { font: 15px/24px "Noto Sans", sans-serif; color: #7fc41c; letter-spacing: -.415px; }
.tx span { font-size: 11px; line-height: 22px; color: #a9a9a9; letter-spacing: -.36px; }
.tc { position: absolute; right: 7px; top: 9px; width: 16px; height: 16px; background: #6e6e72; border-radius: 2px; color: #ddd; display: flex; align-items: center; justify-content: center; }
```
